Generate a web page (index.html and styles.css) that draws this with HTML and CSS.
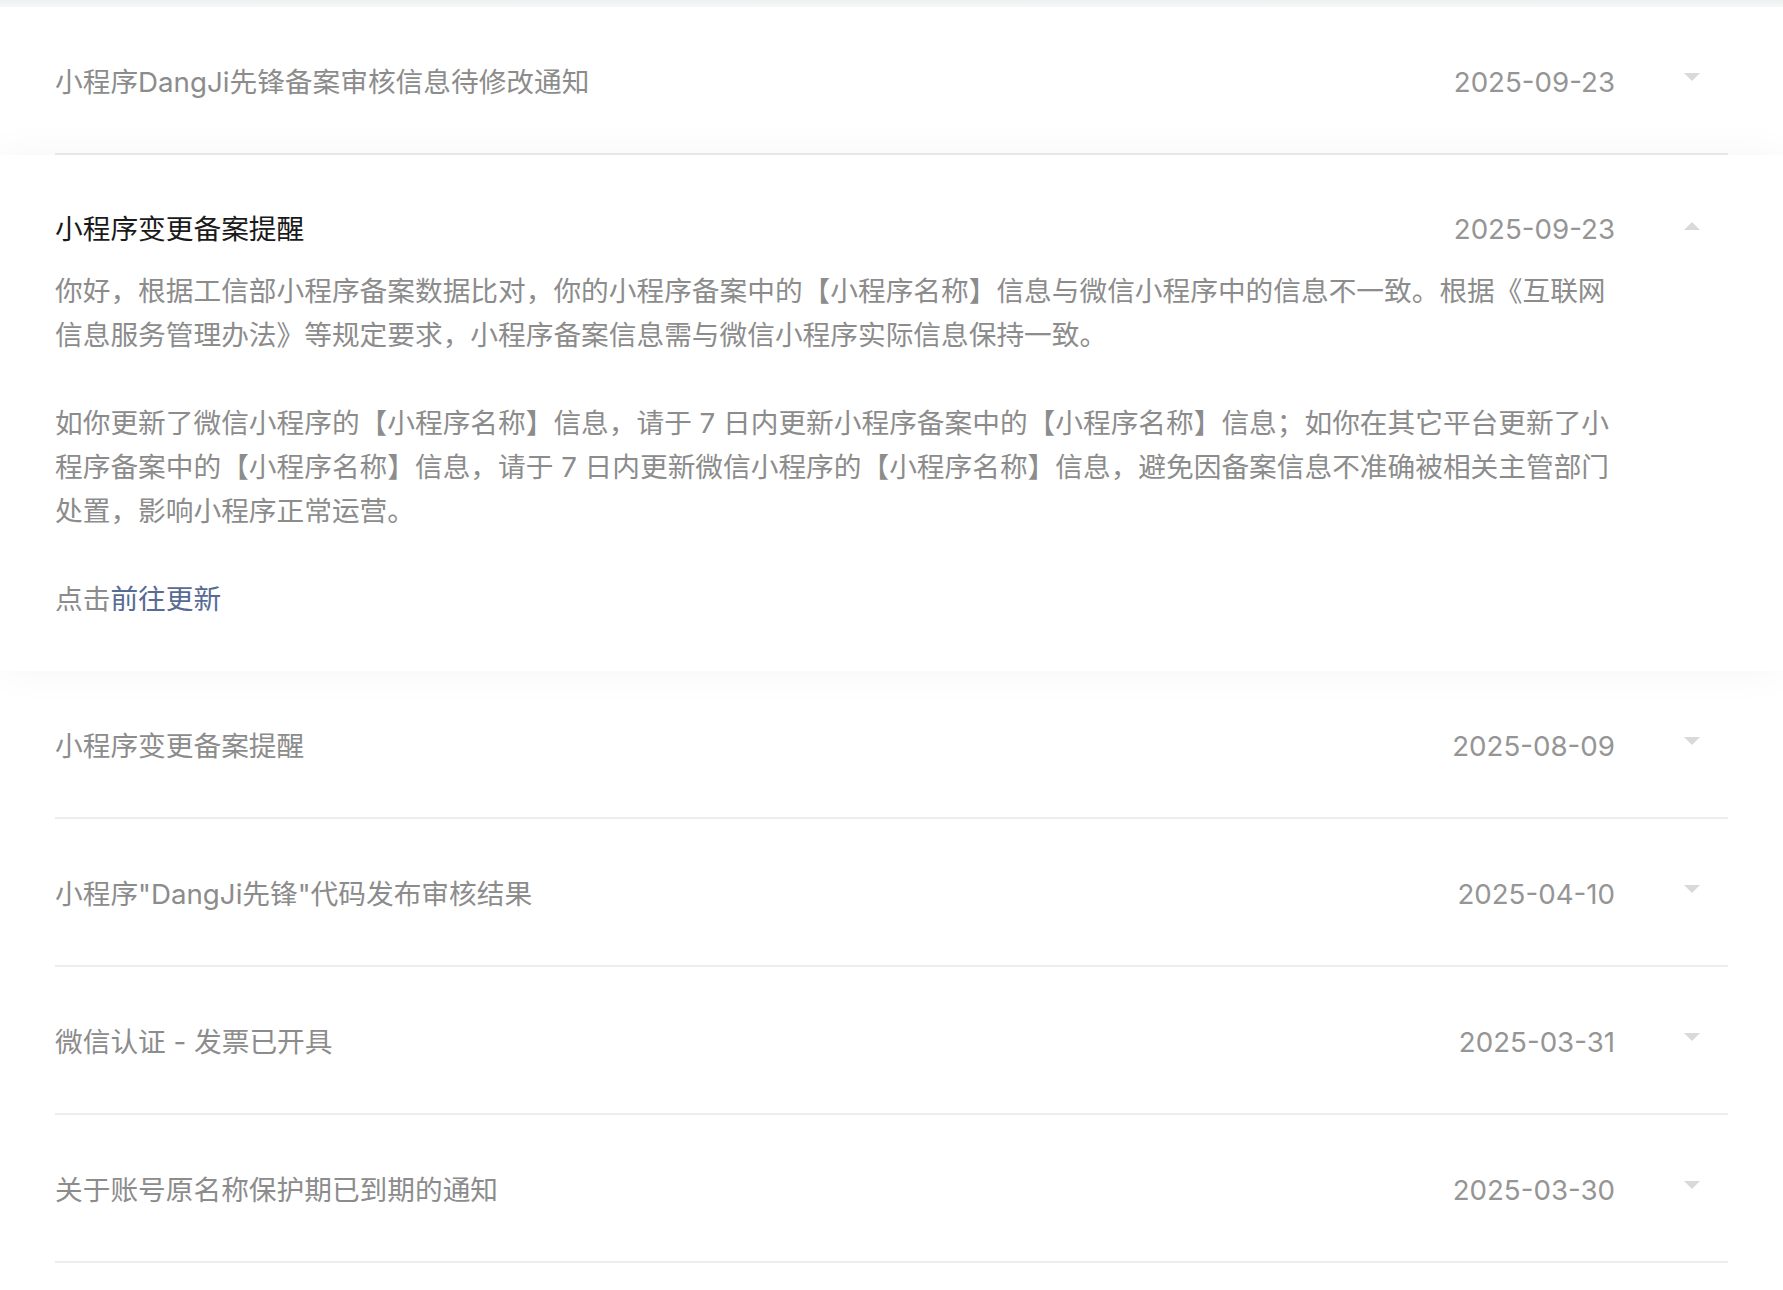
FILE: index.html
```html
<!DOCTYPE html>
<html lang="zh-CN">
  <head>
    <meta charset="UTF-8" />
    <meta name="viewport" content="width=device-width, initial-scale=1.0" />
    <link rel="stylesheet" href="styles.css">
    <title>消息通知</title>
  </head>
  <body>
    <div class="top-edge"></div>
    <div class="list">
      <div class="item">
        <div class="row">
          <p class="title">小程序DangJi先锋备案审核信息待修改通知</p>
          <span class="date">2025-09-23</span>
          <span class="arrow down"></span>
        </div>
      </div>

      <div class="item open">
        <div class="row">
          <p class="title">小程序变更备案提醒</p>
          <span class="date">2025-09-23</span>
          <span class="arrow up"></span>
        </div>
        <div class="body">
          <p>你好，根据工信部小程序备案数据比对，你的小程序备案中的【小程序名称】信息与微信小程序中的信息不一致。根据《互联网信息服务管理办法》等规定要求，小程序备案信息需与微信小程序实际信息保持一致。</p>
          <p>如你更新了微信小程序的【小程序名称】信息，请于 7 日内更新小程序备案中的【小程序名称】信息；如你在其它平台更新了小程序备案中的【小程序名称】信息，请于 7 日内更新微信小程序的【小程序名称】信息，避免因备案信息不准确被相关主管部门处置，影响小程序正常运营。</p>
          <p>点击<a href="#update">前往更新</a></p>
        </div>
      </div>

      <div class="item">
        <div class="row">
          <p class="title">小程序变更备案提醒</p>
          <span class="date">2025-08-09</span>
          <span class="arrow down"></span>
        </div>
      </div>

      <div class="item">
        <div class="row">
          <p class="title">小程序"DangJi先锋"代码发布审核结果</p>
          <span class="date">2025-04-10</span>
          <span class="arrow down"></span>
        </div>
      </div>

      <div class="item">
        <div class="row">
          <p class="title">微信认证 - 发票已开具</p>
          <span class="date">2025-03-31</span>
          <span class="arrow down"></span>
        </div>
      </div>

      <div class="item">
        <div class="row">
          <p class="title">关于账号原名称保护期已到期的通知</p>
          <span class="date">2025-03-30</span>
          <span class="arrow down"></span>
        </div>
      </div>
    </div>
  </body>
</html>
```

FILE: styles.css
```css
body {
  margin: 0;
  padding: 0;
  background-color: #ffffff;
  font-family: Inter, "Noto Sans CJK SC", sans-serif;
  font-size: 27.7px;
}

.top-edge {
  height: 7px;
  background: linear-gradient(#edf1f1, #f6f8f8);
}

.list {
  display: flex;
  flex-direction: column;
}

.item {
  padding: 0 55px;
  background-color: #ffffff;
}

.item .row {
  display: flex;
  align-items: center;
  box-sizing: border-box;
  height: 148px;
  padding-top: 3px;
  border-bottom: 2px solid #ececec;
}

.item .title {
  flex: 1;
  margin: 0;
  color: #8c8c8c;
  line-height: 44px;
}

.item .date {
  color: #959595;
  line-height: 44px;
}

/* small triangle on the right */
.arrow {
  width: 0;
  height: 0;
  margin-left: 69px;
  margin-right: 28px;
  margin-bottom: 10px;
  border-left: 8px solid transparent;
  border-right: 8px solid transparent;
}

.arrow.down {
  border-top: 8px solid #d9d9d9;
}

.arrow.up {
  border-bottom: 8px solid #d9d9d9;
}

/* expanded message */
.item.open {
  position: relative;
  z-index: 1;
  padding-top: 52px;
  padding-bottom: 50px;
  box-shadow: 0 0 40px rgba(0, 0, 0, 0.045);
}

.item.open .row {
  height: 44px;
  padding-top: 0;
  border-bottom: none;
}

.item.open .title {
  color: #1a1a1a;
}

.item.open .arrow {
  margin-bottom: 6px;
}

.body {
  width: 1565px;
  margin-top: 18px;
  color: #8c8c8c;
  line-height: 44px;
}

.body p {
  margin: 0 0 44px 0;
}

.body p:last-child {
  margin-bottom: 0;
}

.body a {
  color: #576b95;
  text-decoration: none;
}
```
